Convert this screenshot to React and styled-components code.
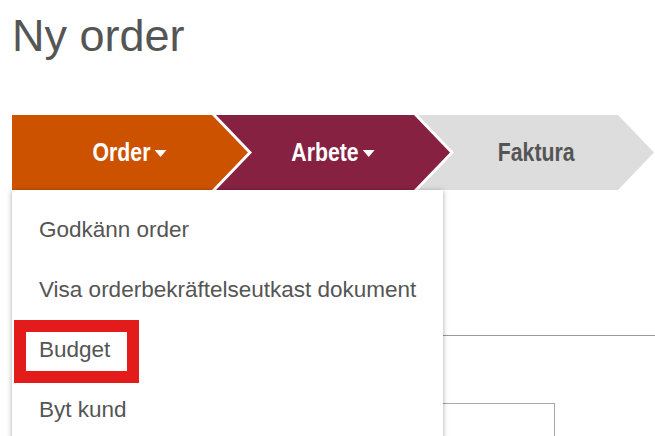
import React from 'react';
import styled, { createGlobalStyle } from 'styled-components';

const GlobalStyle = createGlobalStyle`
    html, body {
        margin: 0;
        padding: 0;
        background: #fff;
        font-family: "Liberation Sans", Arial, sans-serif;
        overflow: hidden;
    }
`;

const steps = [
    { label: 'Order', bg: '#cc5200', color: '#fff', caret: true, width: 236 },
    { label: 'Arbete', bg: '#862141', color: '#fff', caret: true, width: 234 },
    { label: 'Faktura', bg: '#dddddd', color: '#555', caret: false, width: 236 },
];

const menuItems = ['Godkänn order', 'Visa orderbekräftelseutkast dokument', 'Budget', 'Byt kund'];

const App = () => {
    return (
        <Page>
            <GlobalStyle />
            <Title>Ny order</Title>

            <StepBar>
                {steps.map((step, i) => (
                    <Step key={step.label} $bg={step.bg} $width={step.width} $first={i === 0}>
                        <StepLabel $color={step.color}>
                            {step.label}
                            {step.caret && <Caret />}
                        </StepLabel>
                        {i === 0 && (
                            <Dropdown>
                                {menuItems.map((item) => (
                                    <MenuItem key={item}>
                                        {item}
                                        {item === 'Budget' && <Highlight />}
                                    </MenuItem>
                                ))}
                            </Dropdown>
                        )}
                    </Step>
                ))}
            </StepBar>

            <FormArea>
                <SectionHead />
                <Field />
            </FormArea>
        </Page>
    );
};

const Page = styled.div`
    padding: 14px 0 0 12px;
    height: 436px;
    box-sizing: border-box;
`;

const Title = styled.h1`
    margin: 0;
    font-size: 45px;
    line-height: 44px;
    font-weight: normal;
    color: #555;
`;

const StepBar = styled.div`
    display: flex;
    margin-top: 57px;
    height: 75px;
    position: relative;
    z-index: 2;
`;

const Step = styled.div`
    position: relative;
    flex: 0 0 ${(p) => p.$width}px;
    margin-left: ${(p) => (p.$first ? 0 : -32)}px;
    display: flex;
    align-items: center;
    justify-content: center;
    z-index: ${(p) => (p.$first ? 3 : 1)};

    &::before {
        content: '';
        position: absolute;
        inset: 0;
        background: ${(p) => p.$bg};
        clip-path: ${(p) =>
            p.$first
                ? 'polygon(0 0, calc(100% - 36px) 0, 100% 50%, calc(100% - 36px) 100%, 0 100%)'
                : 'polygon(0 0, calc(100% - 36px) 0, 100% 50%, calc(100% - 36px) 100%, 0 100%, 36px 50%)'};
    }
`;

const StepLabel = styled.span`
    position: relative;
    display: flex;
    align-items: center;
    gap: 5px;
    font-size: 25px;
    font-weight: bold;
    color: ${(p) => p.$color};
    transform: scaleX(0.85);
`;

const Caret = styled.span`
    width: 0;
    height: 0;
    border-left: 7px solid transparent;
    border-right: 7px solid transparent;
    border-top: 7px solid #fff;
    margin-top: 1px;
`;

const Dropdown = styled.div`
    position: absolute;
    top: 100%;
    left: 0;
    width: 431px;
    height: 260px;
    padding-top: 10px;
    box-sizing: border-box;
    background: #fff;
    box-shadow: 0 1px 5px rgba(0, 0, 0, 0.35);
`;

const MenuItem = styled.div`
    position: relative;
    height: 60px;
    line-height: 60px;
    padding-left: 27px;
    font-size: 22.5px;
    color: #555;
    white-space: nowrap;
`;

const Highlight = styled.span`
    position: absolute;
    left: 2px;
    top: 0;
    width: 125px;
    height: 63px;
    box-sizing: border-box;
    border: 12px solid #e41b1b;
`;

const FormArea = styled.div`
    display: flex;
    flex-direction: column;
`;

const SectionHead = styled.div`
    height: 145px;
    border-bottom: 1px solid #9a9a9a;
`;

const Field = styled.div`
    margin-top: 67px;
    width: 541px;
    height: 40px;
    border: 1px solid #a8a8a8;
`;

export default App;
